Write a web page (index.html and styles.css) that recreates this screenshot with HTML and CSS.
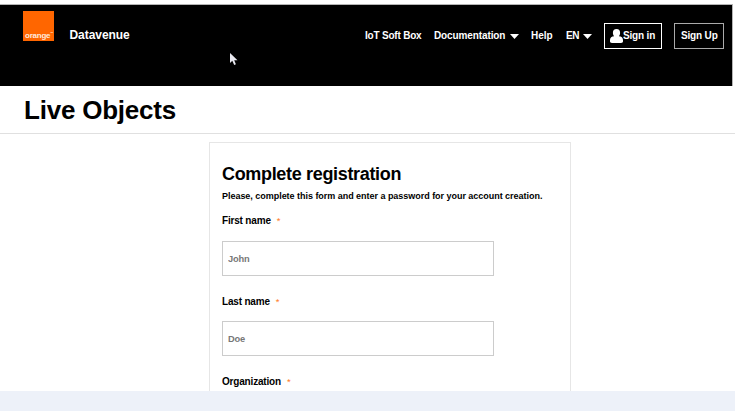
FILE: index.html
```html
<!DOCTYPE html>
<html lang="en">
<head>
<meta charset="utf-8">
<title>Live Objects</title>
<link rel="stylesheet" href="styles.css">
</head>
<body>
<div class="screen">
  <header class="topbar">
    <div class="logo"><span>orange</span><sup>™</sup></div>
    <div class="brand">Datavenue</div>
    <nav class="nav">
      <a class="iot">IoT Soft Box</a>
      <a class="docs">Documentation</a>
      <svg class="caret caret-docs" viewBox="0 0 9 5"><path d="M0 0h9L4.5 5z" fill="#fff"/></svg>
      <a class="help">Help</a>
      <a class="lang">EN</a>
      <svg class="caret caret-lang" viewBox="0 0 9 5"><path d="M0 0h9L4.5 5z" fill="#fff"/></svg>
      <a class="button signin"><svg class="user" viewBox="0 0 13 14"><path d="M6.5 0C4 0 2.9 1.6 2.9 3.7c0 1.5.5 2.7 1.2 3.5C1.7 7.3 0 8.7 0 11v1.3C0 13.4.7 14 2 14h9c1.3 0 2-.6 2-1.7V11c0-2.3-1.7-3.7-4.1-3.8.7-.8 1.2-2 1.2-3.5C10.1 1.6 9 0 6.5 0z" fill="#fff"/></svg><span>Sign in</span></a>
      <a class="button signup"><span>Sign Up</span></a>
    </nav>
  </header>
  <div class="title"><h1>Live Objects</h1></div>
  <main class="main">
    <form class="card">
      <h2>Complete registration</h2>
      <p>Please, complete this form and enter a password for your account creation.</p>
      <label class="first"><span>First name</span><i>*</i></label>
      <input type="text" class="first-input" placeholder="John">
      <label class="last"><span>Last name</span><i>*</i></label>
      <input type="text" placeholder="Doe">
      <label class="org"><span>Organization</span><i>*</i></label>
    </form>
  </main>
  <footer class="band"></footer>
  <svg class="cursor" viewBox="0 0 8 12"><path d="M0 0v10l2.3-2.2L4.2 12l1.7-.8L4.2 7.3H7.5z" fill="#e8e8f0"/></svg>
</div>
</body>
</html>
```
FILE: styles.css
```css
* { box-sizing: border-box; }
body { margin: 0; background: #fff; color: #000; font-family: "Liberation Sans", Arial, sans-serif; font-weight: 700; }
.screen { position: relative; width: 735px; height: 411px; overflow: hidden; display: flex; flex-direction: column; }
.topbar { width: 733px; height: 82px; margin-top: 4px; flex: none; background: #000; border-top: 1px solid #b4b4b4; border-right: 1px solid #b4b4b4; display: flex; align-items: flex-start; color: #fff; }
.logo { width: 31px; height: 30px; margin: 6px 0 0 23px; padding: 20px 0 0 2px; background: #ff6600; color: #ffe9dc; font-size: 8px; line-height: 9px; letter-spacing: -.22px; display: flex; }
.logo sup { font-size: 3px; line-height: 5px; letter-spacing: 0; }
.brand { width: 80px; margin: 23px 0 0 15.5px; font-size: 12px; line-height: 14px; letter-spacing: -.05px; }
.nav { flex: 1; display: flex; align-items: center; justify-content: flex-end; height: 26px; margin: 18px 8px 0 0; font-size: 10px; line-height: 12px; white-space: nowrap; }
.nav a { flex: none; }
.iot { width: 69px; letter-spacing: -.2px; }
.docs { width: 76px; letter-spacing: -.11px; }
.help { width: 35px; letter-spacing: -.05px; }
.lang { width: 17px; letter-spacing: -.5px; }
.caret { width: 9px; height: 5px; flex: none; }
.caret-docs { margin-right: 12px; }
.caret-lang { margin-right: 12px; }
.button { display: flex; align-items: center; height: 26px; border: 1px solid #fff; letter-spacing: -.17px; }
.signin { width: 58px; padding-left: 5px; margin-right: 12px; }
.signup { width: 50px; padding-left: 6px; border-color: #aaa; }
.user { width: 13px; height: 14px; flex: none; }
.title { height: 48px; flex: none; border-bottom: 1px solid #e0e0e0; padding: 9px 0 0 24px; }
h1 { margin: 0; font-size: 26px; line-height: 30px; letter-spacing: -.22px; }
.main { flex: 1; min-height: 0; overflow: hidden; padding: 8px 0 0 209px; }
.card { width: 362px; height: 270px; border: 1px solid #e6e6e6; padding: 21px 0 0 12px; }
h2 { margin: 0; font-size: 18px; line-height: 20px; letter-spacing: -.33px; }
p { margin: 6px 0 0; font-size: 9px; line-height: 12px; white-space: nowrap; letter-spacing: -.03px; }
label { display: flex; font-size: 10px; line-height: 12px; letter-spacing: -.18px; }
label i { margin-left: 6px; color: #ff7a1f; font-size: 9.5px; font-style: normal; font-weight: 400; }
.first { margin-top: 13px; }
.last, .org { margin-top: 20px; }
input { display: block; width: 272px; height: 35px; margin: 13px 0 0; padding: 0 5px; border: 1px solid #ccc; border-radius: 0; background: #fff; font: 700 9.3px "Liberation Sans", Arial, sans-serif; letter-spacing: -.2px; }
.first-input { margin-top: 14px; }
input::placeholder { color: #777; opacity: 1; }
.band { height: 20px; flex: none; background: #edf1f9; }
.cursor { position: absolute; left: 230px; top: 53px; width: 8px; height: 12px; }
```
